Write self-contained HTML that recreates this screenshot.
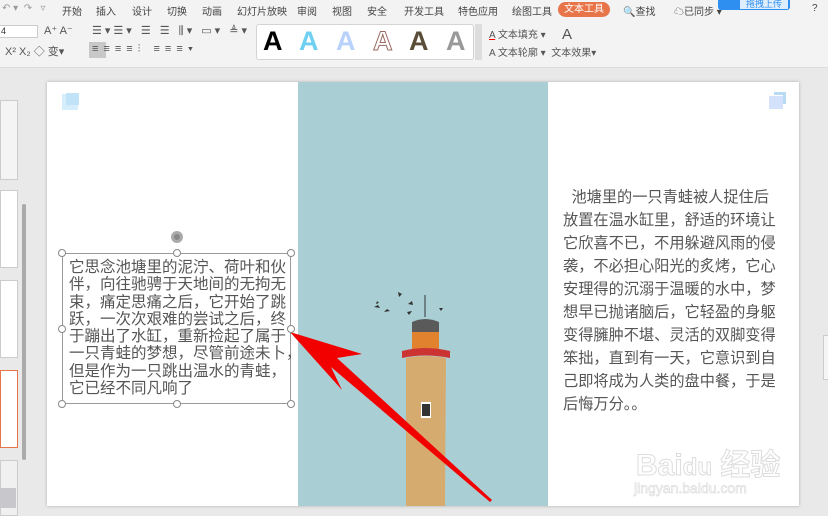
<!DOCTYPE html>
<html><head><meta charset="utf-8"><style>
*{margin:0;padding:0;box-sizing:border-box}
body{width:828px;height:516px;overflow:hidden;background:#e9e9e9;font-family:"Liberation Sans","Noto Sans CJK SC",sans-serif;position:relative;color:#333}
.abs{position:absolute}
.top{left:0;top:0;width:828px;height:68px;background:#f3f3f3;border-bottom:1px solid #dcdcdc}
.menu{top:3px;font-size:10px;color:#444}
.tab{left:558px;top:2px;width:52px;height:15px;background:#e8754a;border-radius:8px;color:#fff;font-size:10px;text-align:center;line-height:15px}
.ic{font-size:11px;color:#555}
.gallery{left:256px;top:24px;width:218px;height:36px;background:#fff;border:1px solid #d4d4d4;border-radius:3px}
.gallery span{position:absolute;top:1px;font-size:27px;font-weight:bold}
.slide{left:47px;top:82px;width:752px;height:424px;background:#fff;box-shadow:0 0 3px #aaa}
.photo{left:298px;top:82px;width:250px;height:424px;background:#a9cfd5}
.tb{left:62px;top:253px;width:229px;height:151px;border:1px solid #9a9a9a}
.h{width:8px;height:8px;border:1px solid #888;background:#fff;border-radius:50%;position:absolute}
.lt{left:69px;top:259px;font-size:15.5px;line-height:17.3px;color:#555;white-space:nowrap}
.rt{left:563px;top:186px;font-size:15.2px;line-height:23px;color:#555;white-space:nowrap}
</style></head><body>
<div class="abs top"></div>
<div class="abs menu" style="left:2px;color:#999">↶ ▾ &nbsp;↷ &nbsp; ▿</div>
<div class="abs menu" style="left:62px">开始</div>
<div class="abs menu" style="left:96px">插入</div>
<div class="abs menu" style="left:132px">设计</div>
<div class="abs menu" style="left:167px">切换</div>
<div class="abs menu" style="left:202px">动画</div>
<div class="abs menu" style="left:237px">幻灯片放映</div>
<div class="abs menu" style="left:297px">审阅</div>
<div class="abs menu" style="left:332px">视图</div>
<div class="abs menu" style="left:367px">安全</div>
<div class="abs menu" style="left:404px">开发工具</div>
<div class="abs menu" style="left:458px">特色应用</div>
<div class="abs menu" style="left:512px">绘图工具</div>
<div class="abs tab">文本工具</div>
<div class="abs menu" style="left:623px">🔍查找</div>
<div class="abs menu" style="left:674px">☁已同步 ▾</div>
<div class="abs" style="left:718px;top:0;width:72px;height:10px;background:#2f8ff0;border-radius:0 0 3px 3px"></div>
<div class="abs" style="left:740px;top:-3px;width:48px;height:12px;background:#dfeefc;font-size:9px;color:#2f8ff0;text-align:center">拖拽上传</div>
<div class="abs menu" style="left:812px">?</div>
<div class="abs" style="left:-2px;top:25px;width:40px;height:13px;background:#fff;border:1px solid #ccc;font-size:9px;padding-left:2px">4</div>
<div class="abs ic" style="left:44px;top:24px">A⁺ A⁻</div>
<div class="abs ic" style="left:5px;top:43px">X² X₂ ◇ 变▾</div>
<div class="abs ic" style="left:92px;top:24px;letter-spacing:3px">☰▾☰▾ ☰ ☰ ⫼▾ ▭▾ ≜▾</div>
<div class="abs" style="left:89px;top:42px;width:17px;height:16px;background:#c8c8c8"></div>
<div class="abs ic" style="left:92px;top:43px;letter-spacing:5px">≡≡≡≡⫶ ≡≡≡▾</div>
<div class="abs gallery">
<span style="left:6px;color:#000">A</span>
<span style="left:42px;color:#6fd0f2">A</span>
<span style="left:79px;color:#b8d2fb">A</span>
<span style="left:116px;color:#fff;-webkit-text-stroke:1px #9a6a60">A</span>
<span style="left:152px;color:#5a4e38">A</span>
<span style="left:189px;color:#999">A</span>
</div>
<div class="abs" style="left:475px;top:24px;width:7px;height:36px;background:#ddd"></div>
<div class="abs ic" style="left:489px;top:26px;font-size:10px"><u style="text-decoration-color:red">A</u> 文本填充 ▾</div>
<div class="abs ic" style="left:489px;top:44px;font-size:10px">A 文本轮廓 ▾ &nbsp;文本效果▾</div>
<div class="abs ic" style="left:562px;top:26px;font-size:15px">A</div>
<div class="abs" style="left:0;top:100px;width:18px;height:80px;background:#f4f4f4;border:1px solid #ccc"></div>
<div class="abs" style="left:0;top:190px;width:18px;height:78px;background:#fff;border:1px solid #ccc"></div>
<div class="abs" style="left:0;top:280px;width:18px;height:78px;background:#fff;border:1px solid #ccc"></div>
<div class="abs" style="left:0;top:370px;width:18px;height:78px;background:#fff;border:1.5px solid #e8754a"></div>
<div class="abs" style="left:0;top:460px;width:18px;height:56px;background:#f0f0f0;border:1px solid #ccc"></div>
<div class="abs" style="left:0;top:488px;width:16px;height:20px;background:#c8c8cc"></div>
<div class="abs" style="left:22px;top:204px;width:4px;height:256px;background:#aaa;border-radius:2px"></div>
<div class="abs slide"></div>
<div class="abs photo"></div>
<div class="abs" style="left:62px;top:94px;width:16px;height:16px;background:#d6eefb"></div>
<div class="abs" style="left:66px;top:93px;width:13px;height:12px;background:#c1e3f7"></div>
<div class="abs" style="left:769px;top:96px;width:14px;height:13px;background:#d3e2fa"></div>
<div class="abs" style="left:774px;top:92px;width:12px;height:12px;border-top:3px solid #b7dbf5;border-right:3px solid #b7dbf5"></div>
<svg class="abs" style="left:298px;top:260px" width="250" height="246" viewBox="0 0 250 246">
<g fill="#333"><path d="M76 47l4-2 2 3zM86 52l3-3 3 2zM100 32l4 2-3 3zM110 44l4-3 1 4zM109 52l5-1-3 4zM141 48l4 0-2 3zM79 41l2 2-3 1z"/></g>
<line x1="127" y1="35" x2="127" y2="57" stroke="#333"/>
<path d="M114 62q13-6 27 0v10h-27z" fill="#5a5a5a"/>
<path d="M114 72h27v18h-27z" fill="#e1832e"/>
<path d="M104 91q23-6 48 0v7q-25-5-48 0z" fill="#c33"/>
<path d="M108 98q20-4 40 0l-1 148h-39z" fill="#d6ab70"/>
<rect x="123" y="142" width="10" height="16" fill="#fff"/><rect x="124" y="144" width="8" height="12" fill="#333"/>
</svg>
<svg class="abs" style="left:290px;top:320px" width="220" height="190" viewBox="0 0 220 190">
<path d="M0 12 L72 34 L47 38 L202 180 L200 182 L41 47 L52 70 Z" fill="#f20000"/>
</svg>
<div class="abs tb"></div>
<div class="h" style="left:58px;top:249px"></div><div class="h" style="left:173px;top:249px"></div><div class="h" style="left:287px;top:249px"></div>
<div class="h" style="left:58px;top:325px"></div><div class="h" style="left:287px;top:325px"></div>
<div class="h" style="left:58px;top:400px"></div><div class="h" style="left:173px;top:400px"></div><div class="h" style="left:287px;top:400px"></div>
<div class="abs" style="left:171px;top:231px;width:12px;height:12px;border-radius:50%;background:#888;border:3px solid #aaa"></div>
<div class="abs lt">它思念池塘里的泥泞、荷叶和伙<br>伴，向往驰骋于天地间的无拘无<br>束，痛定思痛之后，它开始了跳<br>跃，一次次艰难的尝试之后，终<br>于蹦出了水缸，重新捡起了属于<br>一只青蛙的梦想，尽管前途未卜，<br>但是作为一只跳出温水的青蛙，<br>它已经不同凡响了</div>
<div class="abs rt">&nbsp;&nbsp;池塘里的一只青蛙被人捉住后<br>放置在温水缸里，舒适的环境让<br>它欣喜不已，不用躲避风雨的侵<br>袭，不必担心阳光的炙烤，它心<br>安理得的沉溺于温暖的水中，梦<br>想早已抛诸脑后，它轻盈的身躯<br>变得臃肿不堪、灵活的双脚变得<br>笨拙，直到有一天，它意识到自<br>己即将成为人类的盘中餐，于是<br>后悔万分。。</div>
<div class="abs" style="left:636px;top:440px;font-size:30px;color:#fff;-webkit-text-stroke:1px #ddd;font-weight:bold">Bai<span style="font-size:24px">du</span> 经验</div>
<div class="abs" style="left:634px;top:480px;font-size:14px;color:#fff;-webkit-text-stroke:0.7px #ddd">jingyan.baidu.com</div>
<div class="abs" style="left:823px;top:335px;width:6px;height:45px;border:1px solid #ccc;background:#f5f5f5"></div>
</body></html>
